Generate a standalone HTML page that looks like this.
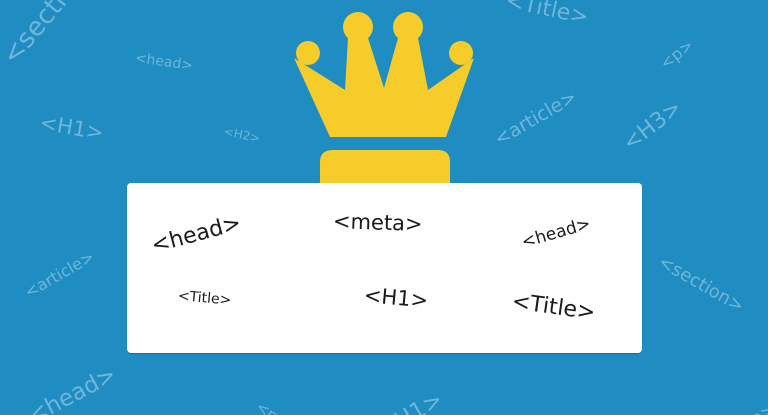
<!DOCTYPE html>
<html><head><style>
html,body{margin:0;width:768px;height:415px;overflow:hidden}
body{background:#1f8cc2;position:relative;font-family:"DejaVu Sans","Liberation Sans",sans-serif}
.t{position:absolute;color:#6db6dc;white-space:nowrap;transform-origin:left center}
.b{position:absolute;color:#1a1a1a;white-space:nowrap;transform-origin:left center}
#box{position:absolute;left:127px;top:183px;width:515px;height:170px;background:#fff;border-radius:4px;box-shadow:0 1px 1px rgba(0,0,0,.2)}
</style></head><body>
<div class="t" style="left:8px;top:46px;font-size:26px;transform:rotate(-50deg)">&lt;section&gt;</div>
<div class="t" style="left:135px;top:50px;font-size:14px;transform:rotate(8deg)">&lt;head&gt;</div>
<div class="t" style="left:40px;top:110px;font-size:21px;transform:rotate(10deg)">&lt;H1&gt;</div>
<div class="t" style="left:224px;top:124px;font-size:12px;transform:rotate(12deg)">&lt;H2&gt;</div>
<div class="t" style="left:506px;top:-12px;font-size:22px;transform:rotate(12deg)">&lt;Title&gt;</div>
<div class="t" style="left:662px;top:56px;font-size:16px;transform:rotate(-38deg)">&lt;p&gt;</div>
<div class="t" style="left:496px;top:130px;font-size:19px;transform:rotate(-30deg)">&lt;article&gt;</div>
<div class="t" style="left:626px;top:134px;font-size:22px;transform:rotate(-38deg)">&lt;H3&gt;</div>
<div class="t" style="left:26px;top:284px;font-size:16px;transform:rotate(-30deg)">&lt;article&gt;</div>
<div class="t" style="left:660px;top:250px;font-size:18px;transform:rotate(30deg)">&lt;section&gt;</div>
<div class="t" style="left:30px;top:405px;font-size:23px;transform:rotate(-28deg)">&lt;head&gt;</div>
<div class="t" style="left:258px;top:396px;font-size:15px;transform:rotate(35deg)">&lt;meta&gt;</div>
<div class="t" style="left:380px;top:420px;font-size:23px;transform:rotate(-30deg)">&lt;H1&gt;</div>
<div class="t" style="left:740px;top:418px;font-size:17px;transform:rotate(-30deg)">&lt;p&gt;</div>
<svg style="position:absolute;left:0;top:0" width="768" height="190">
<g fill="#f5cc2a">
<circle cx="308" cy="53" r="12"/><circle cx="358" cy="27" r="15"/><circle cx="408" cy="27" r="15"/><circle cx="461" cy="53" r="12"/>
<polygon points="294,58 345,90 348,38 368,38 384,88 398,38 418,38 428,90 474,58 446,137 330,137"/>
<path d="M320,183 L320,162 Q320,150 333,150 L438,150 Q450,150 450,162 L450,183 Z"/>
</g>
</svg>
<div id="box"></div>
<div class="b" style="left:152px;top:234px;font-size:22px;transform:rotate(-15deg)">&lt;head&gt;</div>
<div class="b" style="left:333px;top:209px;font-size:21px;transform:rotate(2deg)">&lt;meta&gt;</div>
<div class="b" style="left:522px;top:233px;font-size:17px;transform:rotate(-16deg)">&lt;head&gt;</div>
<div class="b" style="left:178px;top:288px;font-size:14px;transform:rotate(5deg)">&lt;Title&gt;</div>
<div class="b" style="left:364px;top:283px;font-size:21px;transform:rotate(5deg)">&lt;H1&gt;</div>
<div class="b" style="left:512px;top:289px;font-size:22px;transform:rotate(8deg)">&lt;Title&gt;</div>
</body></html>
